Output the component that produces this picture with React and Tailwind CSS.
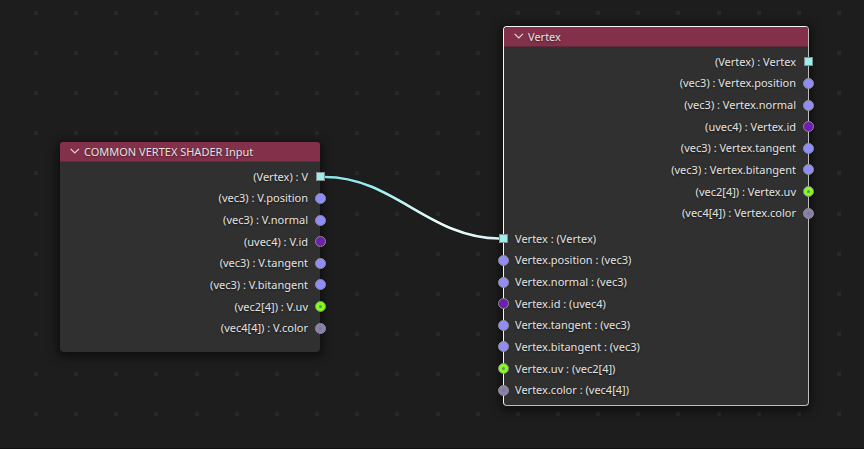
import React from "react";

const SOCKETS = {
  struct: "bg-[#97eff0]",
  vec3: "bg-[#8f8dfa] rounded-full",
  uvec4: "bg-[#6f1fae] rounded-full",
  vec2: "bg-[#80ff1c] rounded-full",
  vec4: "bg-[#8b7fae] rounded-full",
};

const FIELDS = [
  { name: "", type: "Vertex", socket: "struct" },
  { name: ".position", type: "vec3", socket: "vec3" },
  { name: ".normal", type: "vec3", socket: "vec3" },
  { name: ".id", type: "uvec4", socket: "uvec4" },
  { name: ".tangent", type: "vec3", socket: "vec3" },
  { name: ".bitangent", type: "vec3", socket: "vec3" },
  { name: ".uv", type: "vec2[4]", socket: "vec2", array: true },
  { name: ".color", type: "vec4[4]", socket: "vec4", array: true },
];

function Socket({ kind, array }) {
  const size = kind === "struct" ? "size-[9px] mx-px" : "size-[11px]";
  return (
    <span
      className={`flex shrink-0 items-center justify-center border border-[#8b8b8b] ${size} ${SOCKETS[kind]}`}
    >
      {array && <span className="size-[3px] rounded-full bg-[#7c7c7c]" />}
    </span>
  );
}

function Outputs({ owner }) {
  return (
    <ul className="-mr-[6px] grid h-[173px] grid-rows-8">
      {FIELDS.map((f) => (
        <li key={f.name} className="flex items-center justify-end gap-[7px]">
          <span>{`(${f.type}) : ${owner}${f.name}`}</span>
          <Socket kind={f.socket} array={f.array} />
        </li>
      ))}
    </ul>
  );
}

function Inputs({ owner }) {
  return (
    <ul className="-ml-[6px] grid h-[173px] grid-rows-8">
      {FIELDS.map((f) => (
        <li key={f.name} className="flex items-center gap-1.5">
          <Socket kind={f.socket} array={f.array} />
          <span>{`${owner}${f.name} : (${f.type})`}</span>
        </li>
      ))}
    </ul>
  );
}

function Header({ title }) {
  return (
    <header className="flex h-5 items-center rounded-t-[3px] border-b border-[#5f2a3b] bg-[#83314a]">
      <button type="button" aria-label={`Collapse ${title}`} className="ml-2.5 mr-1 block">
        <svg width="10" height="10" viewBox="0 0 10 10" fill="none" stroke="#e2d6da" strokeWidth="1.2">
          <path d="M0.6 1.9 L4.8 6 L9 1.9" />
        </svg>
      </button>
      <h2>{title}</h2>
    </header>
  );
}

const COLUMNS = Array.from({ length: 21 }, (_, i) => Math.round(34 + i * 40.15));
const ROWS = Array.from({ length: 11 }, (_, i) => Math.round(11 + i * 40.1));

export default function App() {
  return (
    <main className="relative h-screen min-h-[420px] overflow-hidden border-b border-[#111111] bg-[#1d1d1d] font-['Noto_Sans','DejaVu_Sans',sans-serif] text-[11px] leading-4 text-[#e2e2e2] [text-shadow:0_1px_2px_rgba(0,0,0,0.5)]">
      <svg className="absolute inset-0 size-full" aria-hidden="true">
        {ROWS.map((y) =>
          COLUMNS.map((x) => (
            <rect key={`${x}-${y}`} x={x} y={y} width="4" height="4" fill="#282828" />
          ))
        )}
      </svg>

      <section className="absolute left-[60px] top-[142px] w-[260px] rounded bg-[#303030] pb-[13px] shadow-[0_2px_10px_3px_rgba(0,0,0,0.5)]">
        <Header title="COMMON VERTEX SHADER Input" />
        <div className="pt-1">
          <Outputs owner="V" />
        </div>
      </section>

      <section className="absolute left-[503px] top-[26px] w-[306px] rounded border border-[#f4f4f4] border-r-[#bdbdbd] border-b-[#bdbdbd] bg-[#303030] pb-1 shadow-[0_2px_10px_3px_rgba(0,0,0,0.5)]">
        <Header title="Vertex" />
        <div className="grid gap-1 pt-1">
          <Outputs owner="Vertex" />
          <Inputs owner="Vertex" />
        </div>
      </section>

      <svg className="pointer-events-none absolute inset-0 size-full" fill="none" aria-hidden="true">
        <defs>
          <linearGradient id="wire" gradientUnits="userSpaceOnUse" x1="324" y1="0" x2="499" y2="0">
            <stop offset="0" stopColor="#86e4e8" />
            <stop offset="0.3" stopColor="#9decef" />
            <stop offset="0.65" stopColor="#f0fbfb" />
            <stop offset="1" stopColor="#d8f0f0" />
          </linearGradient>
        </defs>
        <path d="M325 177 C393 177 430 238.5 499 238.5" stroke="#0c1212" strokeOpacity="0.6" strokeWidth="4" />
        <path d="M325 177 C393 177 430 238.5 499 238.5" stroke="url(#wire)" strokeWidth="2.6" />
      </svg>
    </main>
  );
}
